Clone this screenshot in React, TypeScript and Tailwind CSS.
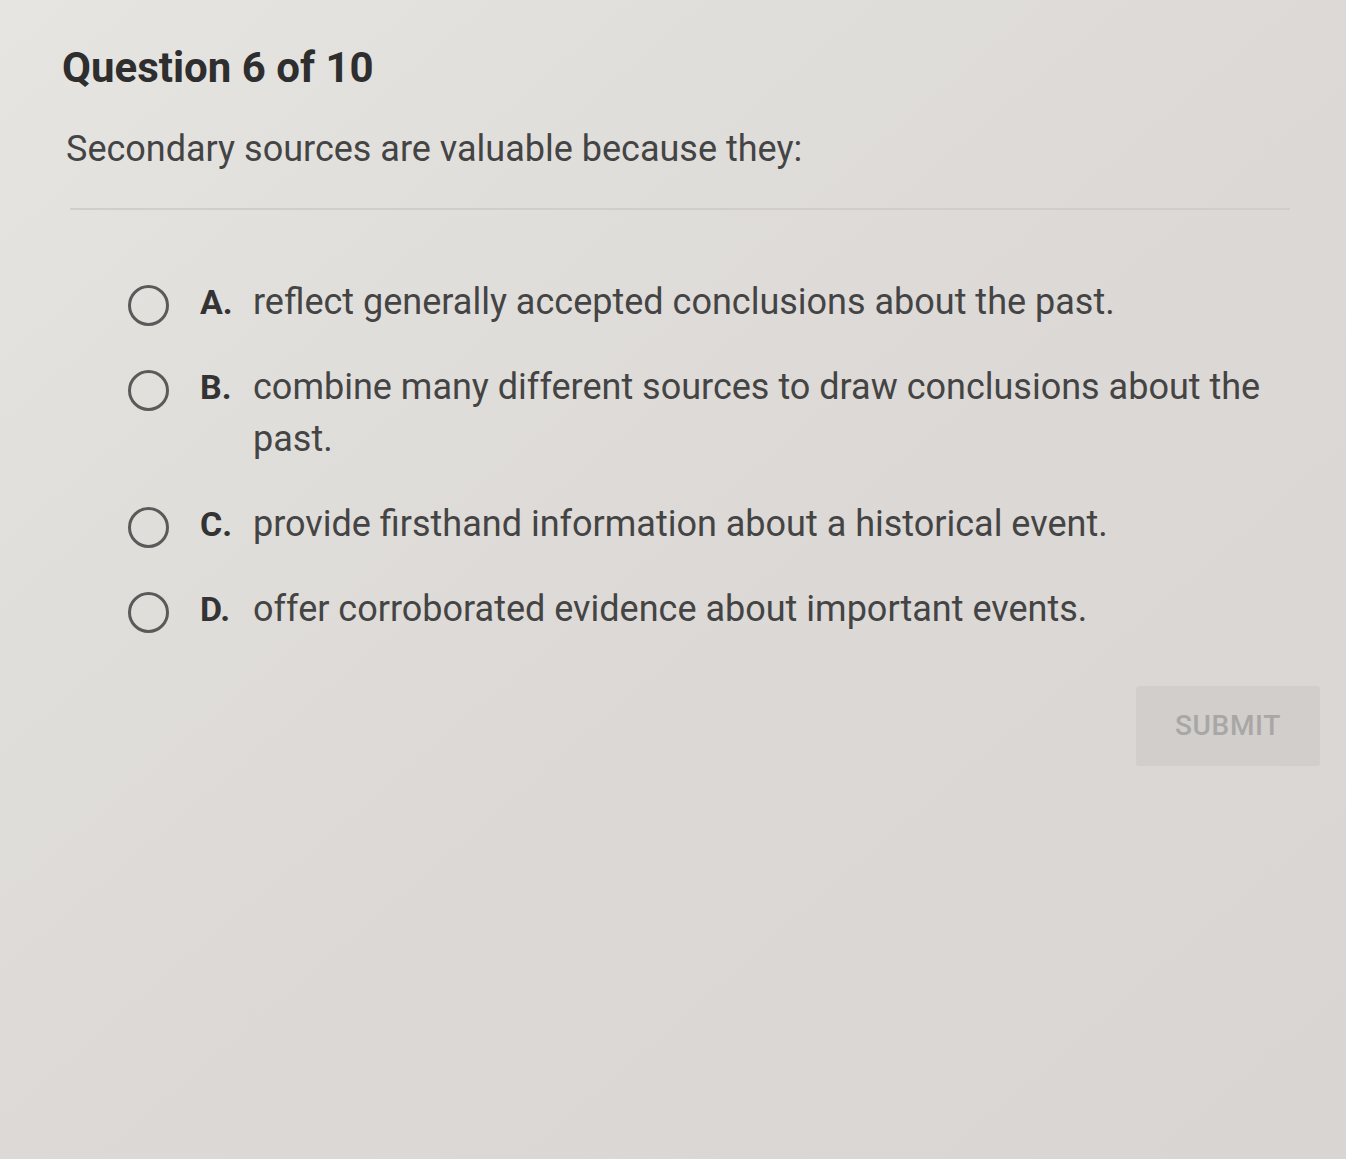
import React from 'react';

const options = [
    { letter: 'A.', text: 'reflect generally accepted conclusions about the past.' },
    { letter: 'B.', text: 'combine many different sources to draw conclusions about the past.' },
    { letter: 'C.', text: 'provide firsthand information about a historical event.' },
    { letter: 'D.', text: 'offer corroborated evidence about important events.' },
];

const Radio: React.FC = () => (
    <span className="mt-[9px] block w-[41px] h-[41px] shrink-0 rounded-full border-[3px] border-[#5a5a5a]" />
);

export default function App() {
    return (
        <div
            className="w-[1346px] h-[1159px] bg-gradient-to-br from-[#e6e5e2] via-[#dcd9d6] to-[#d8d5d2] text-[#3b3b3b] overflow-hidden"
            style={{ fontFamily: 'Roboto, "Liberation Sans", sans-serif' }}
        >
            <div className="pl-[62px] pr-[56px] pt-[42px]">
                <h1 className="text-[42px] font-bold leading-[52px] text-[#2e2e2e]">Question 6 of 10</h1>
                <p className="mt-[32px] pl-[4px] text-[36px] leading-[46px] text-[#444]">
                    Secondary sources are valuable because they:
                </p>
                <div className="mt-[36px] ml-[8px] h-[2px] bg-[#d0cdca]" />

                <div className="mt-[66px] pl-[66px] flex flex-col gap-[33px]">
                    {options.map((o) => (
                        <div key={o.letter} className="flex items-start">
                            <Radio />
                            <span className="ml-[31px] w-[53px] shrink-0 text-[34px] font-bold leading-[52px] text-[#333]">
                                {o.letter}
                            </span>
                            <span className="max-w-[1010px] text-[36px] leading-[52px] text-[#444]">{o.text}</span>
                        </div>
                    ))}
                </div>

                <div className="mt-[51px] flex justify-end">
                    <button className="mr-[-30px] w-[184px] h-[80px] rounded-[3px] bg-[#d1cecb] text-[28px] font-medium tracking-wide text-[#a9a7a5]">
                        SUBMIT
                    </button>
                </div>
            </div>
        </div>
    );
}
